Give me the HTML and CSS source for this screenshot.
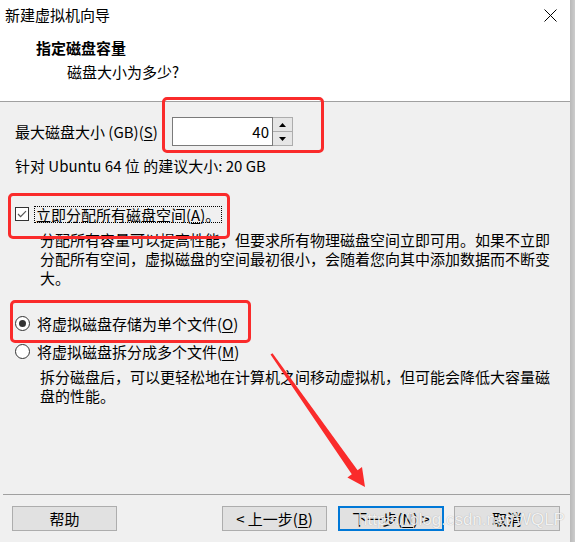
FILE: index.html
```html
<!DOCTYPE html>
<html lang="zh-CN">
<head>
<meta charset="utf-8">
<title>新建虚拟机向导</title>
<link rel="stylesheet" href="styles.css">
</head>
<body>
<div class="window">
  <div class="main">
    <header class="head">
      <div class="titlebar">
        <span class="title">新建虚拟机向导</span>
        <svg class="close" width="13" height="13" viewBox="0 0 13 13"><path d="M0.5 0.5 L12.5 12.5 M12.5 0.5 L0.5 12.5" stroke="#000" stroke-width="1" fill="none"/></svg>
      </div>
      <div class="heading">指定磁盘容量</div>
      <div class="subheading">磁盘大小为多少?</div>
    </header>
    <section class="body">
      <div class="size-row">
        <span class="size-label">最大磁盘大小 (GB)(<u>S</u>)</span>
        <div class="spin">
          <div class="spin-input">40</div>
          <div class="spin-btns">
            <div class="spin-btn"><svg width="7" height="4" viewBox="0 0 7 4"><polygon points="0,4 3.5,0 7,4" fill="#000"/></svg></div>
            <div class="spin-btn spin-down"><svg width="7" height="4" viewBox="0 0 7 4"><polygon points="0,0 7,0 3.5,4" fill="#000"/></svg></div>
          </div>
        </div>
      </div>
      <div class="hint">针对 Ubuntu 64 位 的建议大小: 20 GB</div>
      <div class="check-row">
        <span class="checkbox"><svg width="12" height="12" viewBox="0 0 12 12"><path d="M2 6 L4.6 8.6 L10 3.2" stroke="#555" stroke-width="1.2" fill="none"/></svg></span>
        <span class="focus-label">立即分配所有磁盘空间(<u>A</u>)。</span>
      </div>
      <p class="desc">分配所有容量可以提高性能，但要求所有物理磁盘空间立即可用。如果不立即分配所有空间，虚拟磁盘的空间最初很小，会随着您向其中添加数据而不断变大。</p>
      <div class="radio-row first">
        <span class="radio checked"></span>
        <span class="radio-label">将虚拟磁盘存储为单个文件(<u>O</u>)</span>
      </div>
      <div class="radio-row second">
        <span class="radio"></span>
        <span class="radio-label">将虚拟磁盘拆分成多个文件(<u>M</u>)</span>
      </div>
      <p class="desc">拆分磁盘后，可以更轻松地在计算机之间移动虚拟机，但可能会降低大容量磁盘的性能。</p>
    </section>
    <footer class="foot">
      <div class="foot-line"></div>
      <div class="buttons">
        <div class="btn btn-help">帮助</div>
        <div class="btn btn-back">&lt; 上一步(<u>B</u>)</div>
        <div class="btn btn-next">下一步(<u>N</u>) &gt;</div>
        <div class="btn btn-cancel">取消</div>
      </div>
    </footer>
  </div>
  <div class="edge"></div>

  <div class="mark mark-spin"></div>
  <div class="mark mark-check"></div>
  <div class="mark mark-radio"></div>
  <svg class="arrow" width="575" height="542" viewBox="0 0 575 542">
    <polygon points="270.5,354.5 272.5,353.2 357.6,470.3 362,467 365,487 347.4,477.5 351.8,474.3" fill="#fa2b2b"/>
  </svg>
  <div class="watermark">https://blog.csdn.net/WQLP</div>
</div>
</body>
</html>
```
FILE: styles.css
```css
body {
  margin: 0;
  font-family: "Noto Sans CJK SC", "Microsoft YaHei", sans-serif;
  font-size: 15px;
  color: #000;
}

.window {
  position: relative;
  width: 575px;
  height: 542px;
  display: flex;
  background: #f0f0f0;
  overflow: hidden;
}

.main {
  width: 570px;
  display: flex;
  flex-direction: column;
}

.edge {
  width: 5px;
  background: linear-gradient(to right, #b9b9b9, #cdcdcd);
}

u {
  text-underline-offset: 2px;
}

/* header */
.head {
  background: #fff;
  height: 101px;
  border-bottom: 1px solid #a0a0a0;
}

.titlebar {
  height: 30px;
  display: flex;
  align-items: center;
  justify-content: space-between;
  padding: 0 13px 0 5px;
}

.title {
  line-height: 20px;
}

.close {
  display: block;
}

.heading {
  margin: 8px 0 0 36px;
  font-weight: bold;
  line-height: 20px;
}

.subheading {
  margin: 4px 0 0 67px;
  line-height: 20px;
}

/* body */
.body {
  flex: 1;
  padding: 15px 0 0 15px;
}

.size-row {
  display: flex;
  align-items: center;
  height: 29px;
}

.size-label {
  width: 157px;
  line-height: 20px;
}

.spin {
  display: flex;
}

.spin-input {
  width: 101px;
  height: 29px;
  box-sizing: border-box;
  border: 1px solid #7a7a7a;
  background: #fff;
  text-align: right;
  padding-right: 3px;
  line-height: 27px;
}

.spin-btns {
  width: 20px;
  height: 29px;
  box-sizing: border-box;
  border: 1px solid #adadad;
  border-left: 0;
  display: flex;
  flex-direction: column;
  background: #e6e6e6;
}

.spin-btn {
  flex: 1;
  display: flex;
  align-items: center;
  justify-content: center;
}

.spin-down {
  border-top: 1px solid #adadad;
}

.hint {
  margin-top: 10px;
  line-height: 20px;
}

.check-row {
  display: flex;
  align-items: center;
  height: 20px;
  margin-top: 28px;
}

.checkbox {
  width: 14px;
  height: 14px;
  box-sizing: border-box;
  border: 1px solid #333;
  background: #fff;
  display: flex;
  align-items: center;
  justify-content: center;
}

.focus-label {
  margin-left: 5px;
  border: 1px dotted #000;
  padding: 0 1px;
  line-height: 15px;
}

.desc {
  margin: 6px 0 0 25px;
  width: 515px;
  line-height: 19px;
}

.radio-row {
  display: flex;
  align-items: center;
  gap: 7px;
  height: 20px;
}

.radio-row.first {
  margin-top: 26px;
}

.radio-row.second {
  margin-top: 8px;
}

.radio {
  width: 15px;
  height: 15px;
  box-sizing: border-box;
  border-radius: 50%;
  border: 1px solid #333;
  background: #fff;
  display: flex;
  align-items: center;
  justify-content: center;
}

.radio.checked::after {
  content: "";
  width: 7px;
  height: 7px;
  border-radius: 50%;
  background: #333;
}

/* footer */
.foot {
  height: 48px;
}

.foot-line {
  margin-left: 3px;
  height: 1px;
  background: #a0a0a0;
}

.buttons {
  display: flex;
  padding: 11px 10px 0 12px;
}

.btn {
  height: 25px;
  box-sizing: border-box;
  border: 1px solid #adadad;
  background: #e1e1e1;
  display: flex;
  align-items: center;
  justify-content: center;
  line-height: 20px;
  white-space: nowrap;
}

.btn-help {
  width: 105px;
}

.btn-back {
  width: 105px;
  margin-left: auto;
}

.btn-next {
  width: 106px;
  margin-left: 11px;
  border: 2px solid #0078d7;
}

.btn-cancel {
  width: 106px;
  margin-left: 10px;
}

/* annotations */
.mark {
  position: absolute;
  box-sizing: border-box;
  border: 3px solid #fa2b2b;
  border-radius: 5px;
}

.mark-spin {
  left: 162px;
  top: 97px;
  width: 162px;
  height: 56px;
}

.mark-check {
  left: 8px;
  top: 193px;
  width: 222px;
  height: 46px;
}

.mark-radio {
  left: 10px;
  top: 300px;
  width: 241px;
  height: 43px;
}

.arrow {
  position: absolute;
  left: 0;
  top: 0;
  pointer-events: none;
}

.watermark {
  position: absolute;
  left: 358px;
  top: 509px;
  font-family: "Liberation Sans", Arial, sans-serif;
  font-size: 17px;
  line-height: 22px;
  color: rgba(255, 255, 255, 0.85);
  text-shadow: 0 0 1px rgba(0, 0, 0, 0.3);
  pointer-events: none;
}
```
